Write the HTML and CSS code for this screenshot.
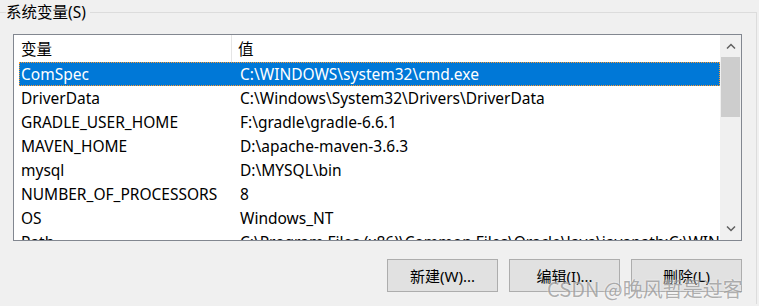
FILE: index.html
```html
<!DOCTYPE html>
<html lang="zh-CN">
<head>
    <meta charset="UTF-8">
    <title>系统变量</title>
    <link rel="stylesheet" href="styles.css">
</head>
<body>
    <fieldset class="group">
        <legend>系统变量(S)</legend>
        <div class="listbox">
            <div class="list-main">
                <div class="list-header">
                    <div class="col-name">变量</div>
                    <div class="col-value">值</div>
                </div>
                <div class="row selected">
                    <div class="col-name">ComSpec</div>
                    <div class="col-value">C:\WINDOWS\system32\cmd.exe</div>
                </div>
                <div class="row">
                    <div class="col-name">DriverData</div>
                    <div class="col-value">C:\Windows\System32\Drivers\DriverData</div>
                </div>
                <div class="row">
                    <div class="col-name">GRADLE_USER_HOME</div>
                    <div class="col-value">F:\gradle\gradle-6.6.1</div>
                </div>
                <div class="row">
                    <div class="col-name">MAVEN_HOME</div>
                    <div class="col-value">D:\apache-maven-3.6.3</div>
                </div>
                <div class="row">
                    <div class="col-name">mysql</div>
                    <div class="col-value">D:\MYSQL\bin</div>
                </div>
                <div class="row">
                    <div class="col-name">NUMBER_OF_PROCESSORS</div>
                    <div class="col-value">8</div>
                </div>
                <div class="row">
                    <div class="col-name">OS</div>
                    <div class="col-value">Windows_NT</div>
                </div>
                <div class="row">
                    <div class="col-name">Path</div>
                    <div class="col-value">C:\Program Files (x86)\Common Files\Oracle\Java\javapath;C:\WINDOWS\system32</div>
                </div>
            </div>
            <div class="scrollbar">
                <div class="arrow">
                    <svg width="10" height="6" viewBox="0 0 10 6"><path d="M1 5.5 L5 1.5 L9 5.5" fill="none" stroke="#606060" stroke-width="1.5"/></svg>
                </div>
                <div class="thumb"></div>
                <div class="track"></div>
                <div class="arrow">
                    <svg width="10" height="6" viewBox="0 0 10 6"><path d="M1 0.5 L5 4.5 L9 0.5" fill="none" stroke="#606060" stroke-width="1.5"/></svg>
                </div>
            </div>
        </div>
        <div class="buttons">
            <button>新建(W)...</button>
            <button>编辑(I)...</button>
            <button>删除(L)</button>
        </div>
    </fieldset>
    <div class="watermark">CSDN @晚风暂是过客</div>
</body>
</html>
```
FILE: styles.css
```css
html, body {
    margin: 0;
    padding: 0;
}
body {
    width: 759px;
    height: 306px;
    overflow: hidden;
    background: #f0f0f0;
    font-family: "Noto Sans", "Noto Sans CJK SC", sans-serif;
    font-size: 15.5px;
    color: #000;
    position: relative;
}
.group {
    width: 729px;
    min-width: 0;
    margin: 3px 0 0 -10px;
    padding: 0 14px 0 23px;
    border: none;
    border-top: 1px solid #dcdcdc;
    border-right: 1px solid #dcdcdc;
    height: 300px;
}
.group legend {
    padding: 0 4px 0 0;
    margin-left: -7px;
    font-size: 15.5px;
    line-height: 18px;
}
.listbox {
    margin-top: 13px;
    height: 205px;
    border: 1px solid #828790;
    background: #fff;
    display: flex;
    overflow: hidden;
}
.list-main {
    flex: 1;
    min-width: 0;
    overflow: hidden;
    white-space: nowrap;
}
.list-header {
    height: 27px;
    display: flex;
    align-items: center;
}
.list-header .col-name {
    width: 210px;
    padding-left: 7px;
    height: 100%;
    display: flex;
    align-items: center;
    border-right: 1px solid #e5e5e5;
}
.list-header .col-value {
    padding-left: 6px;
}
.row {
    display: flex;
    align-items: center;
    height: 24px;
    margin-left: 5px;
}
.row .col-name {
    width: 213px;
    padding-left: 2px;
    flex-shrink: 0;
}
.row .col-value {
    padding-left: 6px;
    white-space: nowrap;
}
.row.selected {
    background: #0078d7;
    color: #fff;
    outline: 1px dotted #ff9a2e;
    outline-offset: -1px;
}
.scrollbar {
    width: 21px;
    flex-shrink: 0;
    background: #f0f0f0;
    display: flex;
    flex-direction: column;
}
.scrollbar .arrow {
    height: 22px;
    display: flex;
    align-items: center;
    justify-content: center;
}
.scrollbar .thumb {
    height: 60px;
    margin: 0 1px;
    background: #cdcdcd;
}
.scrollbar .track {
    flex: 1;
}
.buttons {
    margin-top: 18px;
    display: flex;
    justify-content: flex-end;
    gap: 11px;
}
.buttons button {
    width: 111px;
    height: 33px;
    background: #e1e1e1;
    border: 1px solid #adadad;
    font-family: "Noto Sans", "Noto Sans CJK SC", sans-serif;
    font-size: 15px;
    color: #000;
    padding: 0;
}
.watermark {
    position: absolute;
    left: 547px;
    top: 274px;
    font-family: "Noto Sans CJK SC", sans-serif;
    font-size: 20px;
    color: rgba(110, 110, 110, 0.55);
    text-shadow: 0 0 2px rgba(255, 255, 255, 0.9);
    white-space: nowrap;
}
```
